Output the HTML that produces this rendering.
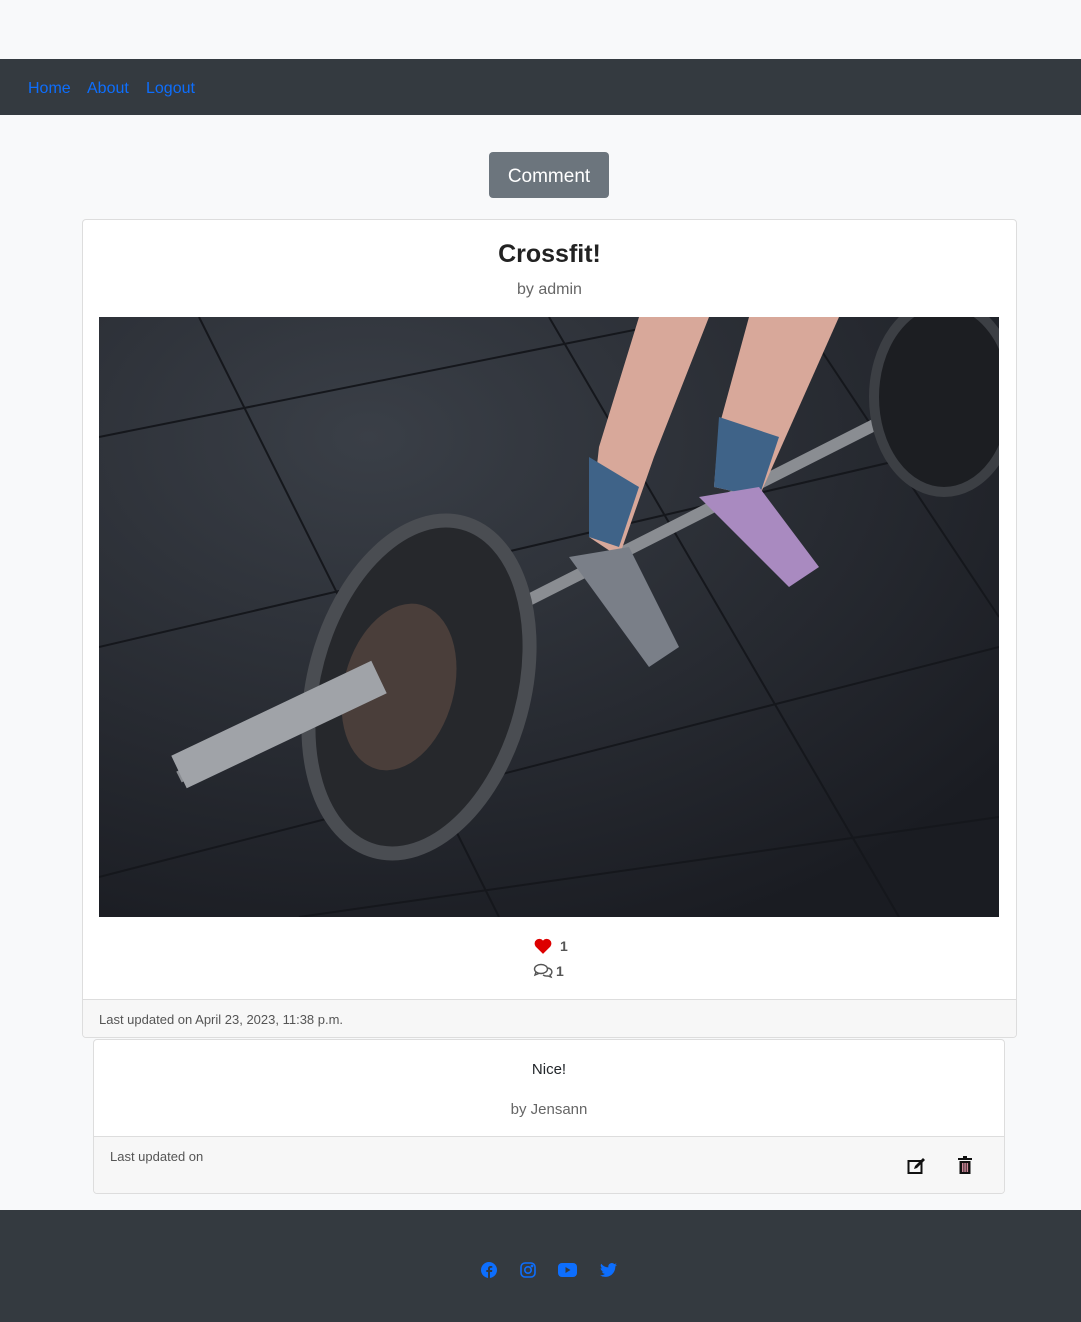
<!DOCTYPE html>
<html><head><style>
*{box-sizing:border-box;margin:0;padding:0}
body{width:1081px;height:1322px;background:#f8f9fa;font-family:"Liberation Sans",sans-serif;color:#212529;position:relative;overflow:hidden}
.nav{position:absolute;top:59px;left:0;width:1081px;height:56px;background:#343a40}
.nav a{position:absolute;top:21px;color:#0d6efd;font-size:16px;text-decoration:none}
.btn{position:absolute;left:489px;top:152px;width:120px;height:46px;background:#6c757d;border-radius:4px;color:#fff;font-size:19px;text-align:center;line-height:50px}
.card{position:absolute;left:82px;top:219px;width:935px;height:819px;background:#fff;border:1px solid #ddd;border-radius:4px;overflow:hidden}
.c{position:absolute;width:100%;text-align:center}
.foot{position:absolute;left:0;bottom:0;width:100%;height:38px;background:#f7f7f7;border-top:1px solid #ddd;font-size:13px;color:#555;padding:12px 16px}
.card2{position:absolute;left:93px;top:1039px;width:912px;height:155px;background:#fff;border:1px solid #ddd;border-radius:4px;overflow:hidden}
.footer{position:absolute;left:0;top:1210px;width:1081px;height:112px;background:#343a40}
</style></head><body>
<div class="nav"><a style="left:28px">Home</a><a style="left:87px">About</a><a style="left:146px">Logout</a></div>
<div class="btn">Comment</div>
<div class="card">
<div class="c" style="top:20px;font-size:25px;font-weight:bold;color:#222">Crossfit!</div>
<div class="c" style="top:61px;font-size:16px;color:#666">by admin</div>
<svg style="position:absolute;left:16px;top:97px" width="900" height="600" viewBox="0 0 900 600">
<defs><radialGradient id="g" cx="0.3" cy="0.2" r="0.9"><stop offset="0" stop-color="#3a3f47"/><stop offset="1" stop-color="#1a1c22"/></radialGradient></defs>
<rect width="900" height="600" fill="url(#g)"/>
<g stroke="#15171c" stroke-width="2" fill="none"><path d="M0 120L600 0M0 330L900 120M0 560L900 330M200 600L900 500M100 0L400 600M450 0L800 600M700 0L900 300"/></g>
<line x1="80" y1="460" x2="870" y2="60" stroke="#8a8d92" stroke-width="12"/>
<ellipse cx="320" cy="370" rx="105" ry="170" fill="#26282c" stroke="#4a4d52" stroke-width="14" transform="rotate(15 320 370)"/>
<ellipse cx="300" cy="370" rx="55" ry="85" fill="#4a3e3a" transform="rotate(15 300 370)"/>
<line x1="80" y1="455" x2="280" y2="360" stroke="#a0a3a8" stroke-width="36"/>
<ellipse cx="845" cy="80" rx="70" ry="95" fill="#1c1e22" stroke="#3c3f44" stroke-width="10"/>
<path d="M540 0L500 130L490 220L520 240L555 140L610 0Z" fill="#d8a89a"/><path d="M650 0L620 110L615 170L660 180L700 90L740 0Z" fill="#d8a89a"/>
<path d="M490 140L540 170L520 230L490 220Z" fill="#3f6388"/><path d="M620 100L680 120L660 180L615 170Z" fill="#3f6388"/>
<path d="M470 240L530 230L580 330L550 350Z" fill="#7a7f88"/><path d="M600 180L660 170L720 250L690 270Z" fill="#a98ac0"/>
</svg>
<svg style="position:absolute;left:451px;top:718px" width="18" height="16" viewBox="0 0 16 14"><path d="M8 14L1.5 7.5A3.8 3.8 0 0 1 8 2.2 3.8 3.8 0 0 1 14.5 7.5Z" fill="#d00"/></svg>
<div style="position:absolute;left:477px;top:718px;font-size:14px;font-weight:bold;color:#555">1</div>
<svg style="position:absolute;left:450px;top:743px" width="20" height="16" viewBox="0 0 20 16" fill="none" stroke="#555" stroke-width="1.4"><ellipse cx="8" cy="6" rx="6.5" ry="4.5"/><path d="M3 9L2 12L6 10.3"/><path d="M15 5a5 4 0 0 1 2 7l1 2-3-1a6 4 0 0 1-5-1"/></svg>
<div style="position:absolute;left:473px;top:743px;font-size:14px;font-weight:bold;color:#555">1</div>
<div class="foot">Last updated on April 23, 2023, 11:38 p.m.</div>
</div>
<div class="card2">
<div class="c" style="top:21px;font-size:15px">Nice!</div>
<div class="c" style="top:61px;font-size:15px;color:#666">by Jensann</div>
<div style="position:absolute;left:0;top:96px;width:100%;height:59px;background:#f7f7f7;border-top:1px solid #ddd;font-size:13px;color:#555;padding:12px 16px">Last updated on
<svg style="position:absolute;left:813px;top:20px" width="20" height="18" viewBox="0 0 20 18"><rect x="1.5" y="4" width="13" height="12" fill="none" stroke="#111" stroke-width="2"/><path d="M7 12L8 9L16 1L18 3L10 11Z" fill="#111"/></svg>
<svg style="position:absolute;left:864px;top:19px" width="14" height="18" viewBox="0 0 14 18"><rect x="0" y="2" width="14" height="2" fill="#111"/><rect x="5" y="0" width="4" height="2" fill="#111"/><rect x="1.5" y="5" width="11" height="13" fill="#111"/><rect x="4" y="7" width="1.5" height="9" fill="#c89"/><rect x="6.3" y="7" width="1.5" height="9" fill="#c89"/><rect x="8.6" y="7" width="1.5" height="9" fill="#c89"/></svg>
</div>
</div>
<div class="footer">
<svg style="position:absolute;left:481px;top:52px" width="16" height="16" viewBox="0 0 16 16"><circle cx="8" cy="8" r="8" fill="#0d6efd"/><path d="M9 16V10h2l.3-2H9V6.8c0-.6.3-1 1-1h1.3V4.1A10 10 0 0 0 9.6 4C8 4 7 5 7 6.6V8H5.3v2H7v6Z" fill="#343a40"/></svg>
<svg style="position:absolute;left:520px;top:52px" width="16" height="16" viewBox="0 0 16 16" fill="none" stroke="#0d6efd" stroke-width="1.6"><rect x="1" y="1" width="14" height="14" rx="4"/><circle cx="8" cy="8" r="3.2"/><circle cx="12" cy="4" r=".6" fill="#0d6efd"/></svg>
<svg style="position:absolute;left:558px;top:53px" width="19" height="14" viewBox="0 0 19 14"><rect width="19" height="14" rx="4" fill="#0d6efd"/><path d="M7.5 4v6l5-3Z" fill="#343a40"/></svg>
<svg style="position:absolute;left:600px;top:53px" width="17" height="14" viewBox="0 0 16 13"><path d="M16 1.5a6.5 6.5 0 0 1-1.9.5A3.3 3.3 0 0 0 15.5.2a6.6 6.6 0 0 1-2 .8A3.3 3.3 0 0 0 7.9 4 9.3 9.3 0 0 1 1.1.6a3.3 3.3 0 0 0 1 4.4A3.3 3.3 0 0 1 .6 4.6a3.3 3.3 0 0 0 2.7 3.2 3.3 3.3 0 0 1-1.5.1 3.3 3.3 0 0 0 3 2.3A6.6 6.6 0 0 1 0 11.5 9.3 9.3 0 0 0 5 13c6 0 9.4-5 9.4-9.4v-.4A6.7 6.7 0 0 0 16 1.5Z" fill="#0d6efd"/></svg>
</div>
</body></html>
